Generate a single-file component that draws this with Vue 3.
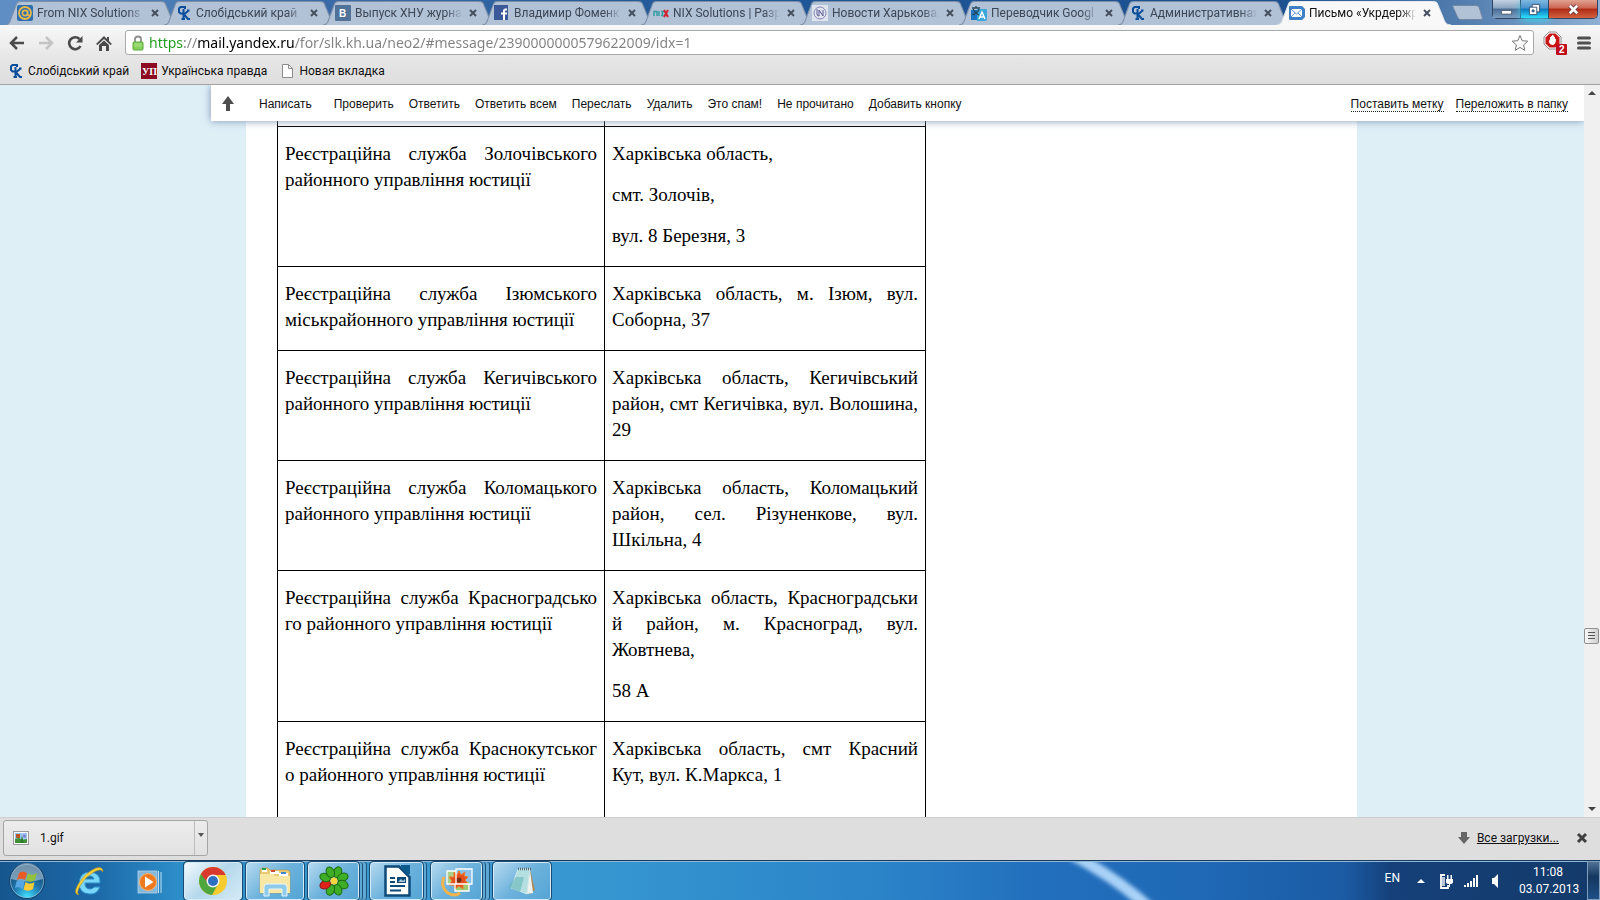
<template>
  <div class="desktop">
    <!-- вкладки браузера -->
    <header class="tab_strip">
      <nav class="tabs">
        <div
          v-for="(tab, index) in tabs"
          :key="tab.title"
          :class="['tab', { active: index === activeTab }]"
          @click="activeTab = index"
        >
          <svg class="tab_shape" viewBox="0 0 174 24" preserveAspectRatio="none">
            <path
              d="M0 24C4 24 5 21 6 18L11 5C12 2 13 1.5 16 1.5H155C159 1.5 160 2 161 5L167 19C168 22 170 24 174 24"
            />
          </svg>
          <svg class="favicon" viewBox="0 0 16 16">
            <template v-if="tab.icon === 'mailru'">
              <rect width="16" height="16" rx="2" fill="#2d6fae" />
              <circle cx="8" cy="8" r="6" fill="none" stroke="#e9b84c" stroke-width="1.8" />
              <circle cx="8" cy="8" r="2.6" fill="none" stroke="#e9b84c" stroke-width="1.6" />
              <path d="M10.6 5.5V9C10.6 11 13 11 13.5 9" fill="none" stroke="#e9b84c" stroke-width="1.4" />
            </template>
            <template v-else-if="tab.icon === 'sk'">
              <path d="M9 4V2H4.500L3 3.500V7L4.500 8.500H7" fill="none" stroke="#0b4f9c" stroke-width="2" />
              <path d="M7.500 4V14M5.500 14H9M12.500 5.500L8 9.500L12 14H14M11 5.500H13.500" fill="none" stroke="#0b4f9c" stroke-width="2" />
            </template>
            <template v-else-if="tab.icon === 'vk'">
              <rect width="16" height="16" rx="1" fill="#507299" />
              <text x="4" y="12" class="glyph" fill="#fff">B</text>
            </template>
            <template v-else-if="tab.icon === 'fb'">
              <rect y="0" width="14" height="15" fill="#3b5998" />
              <path d="M13 4.500H11.500Q10 4.500 10 6V15M7 8.500H13" fill="none" stroke="#fff" stroke-width="2" />
            </template>
            <template v-else-if="tab.icon === 'nix'">
              <path d="M1 11V6.500H4V11M6 6V11M8 6.500H11M8 10.500H10.500M9.500 6.500V10.500" fill="none" stroke="#2f9aa0" stroke-width="1.4" />
              <path d="M11 5L15 12M15 5L11 12" stroke="#cf2430" stroke-width="2" />
            </template>
            <template v-else-if="tab.icon === 'news'">
              <rect width="16" height="16" fill="#dfe5ef" />
              <circle cx="8" cy="8" r="6" fill="none" stroke="#8a86b4" />
              <path d="M5 4V9Q5 11 7 11V5L11 11V5" fill="none" stroke="#5e5a95" />
            </template>
            <template v-else-if="tab.icon === 'translate'">
              <rect x="0" y="5" width="8" height="10" fill="#1873c0" />
              <path d="M6 4H15L16 5V15L14 16H6Z" fill="#3ba6dc" />
              <path d="M1 3H9M5 1V3M2 4C4 8 6 9 8 10M8 4C7 8 4 9 1 10" fill="none" stroke="#27485f" stroke-width="1.3" />
              <path d="M8 14L11 7L14 14M9 12H13" fill="none" stroke="#fff" stroke-width="1.4" />
            </template>
            <template v-else>
              <path d="M1 1H13L16 4V12L13 15H1Q0 15 0 14V2Q0 1 1 1Z" fill="#3f7fc6" />
              <rect x="2" y="4" width="11" height="8" fill="#fff" />
              <path d="M2 4L7.500 9L13 4M2 12L6 8M13 12L9 8" fill="none" stroke="#5b93d0" />
            </template>
          </svg>
          <span class="tab_title">{{ tab.title }}</span>
          <button class="tab_close" aria-label="Закрыть вкладку">
            <svg viewBox="0 0 8 8"><path d="M1 1L7 7M7 1L1 7" /></svg>
          </button>
        </div>
        <button class="new_tab" aria-label="Новая вкладка">
          <svg viewBox="0 0 31 15">
            <path d="M1 2Q0 .5 2 .5H24Q26 .5 27 2L30.500 13Q31 14.500 29 14.500H9Q7 14.500 6 13Z" />
          </svg>
        </button>
      </nav>
      <div class="window_buttons">
        <button class="win_min" aria-label="Свернуть">
          <svg viewBox="0 0 14 14"><path d="M1.500 8H12.500V12H1.500Z" fill="#fff" stroke="#4a5a70" /></svg>
        </button>
        <button class="win_restore" aria-label="Восстановить">
          <svg viewBox="0 0 14 14">
            <path d="M4.500 1.500H12.500V9.500H4.500Z" fill="#fff" stroke="#34506e" />
            <path d="M1.500 4.500H9.500V12.500H1.500Z" fill="#fff" stroke="#34506e" />
            <path d="M4.500 7.500H6.500V9.500H4.500Z" fill="#1a8fd0" stroke="#34506e" />
          </svg>
        </button>
        <button class="win_close" aria-label="Закрыть">
          <svg viewBox="0 0 14 14">
            <path d="M3 3L11 11M11 3L3 11" stroke="#5b3440" stroke-width="4.5" />
            <path d="M3 3L11 11M11 3L3 11" stroke="#fff" stroke-width="2.8" />
          </svg>
        </button>
      </div>
    </header>

    <!-- адресная строка -->
    <div class="toolbar">
      <button class="nav_button" aria-label="Назад">
        <svg viewBox="0 0 16 16"><path d="M15 8H2M8 2L2 8L8 14" fill="none" stroke="#4a4a4a" stroke-width="2.5" /></svg>
      </button>
      <button class="nav_button" aria-label="Вперёд">
        <svg viewBox="0 0 16 16"><path d="M1 8H14M8 2L14 8L8 14" fill="none" stroke="#c4c4c4" stroke-width="2.5" /></svg>
      </button>
      <button class="nav_button" aria-label="Обновить">
        <svg viewBox="0 0 16 16">
          <path d="M12.500 4A6 6 0 1 0 13.500 11" fill="none" stroke="#4a4a4a" stroke-width="2.6" />
          <path d="M15.500 1V7.500H9Z" fill="#4a4a4a" />
        </svg>
      </button>
      <button class="nav_button" aria-label="Домой">
        <svg viewBox="0 0 16 16">
          <path d="M8 1L11 4V2H13V6L16 9L14.500 10L8 4L1.500 10L0 9Z" fill="#4a4a4a" />
          <path d="M3 10L8 5.500L13 10V16H10V11H6V16H3Z" fill="#4a4a4a" />
        </svg>
      </button>
      <div class="address">
        <svg class="lock" viewBox="0 0 12 16">
          <path d="M3 8V4Q3 1.500 6 1.500T9 4V8" fill="none" stroke="#8d8d8d" stroke-width="1.8" />
          <rect x="1" y="7" width="10" height="8" rx="1" fill="#86cf5c" stroke="#57a93a" />
          <path d="M2 9H10M2 11H10" stroke="#a9e384" />
        </svg>
        <input v-model="url" class="url" type="text" aria-label="Адрес" spellcheck="false" />
        <button class="star" aria-label="Добавить в закладки">
          <svg viewBox="0 0 18 18">
            <path d="M9 1.500L11.200 6.700L16.800 7.200L12.600 10.900L13.800 16.300L9 13.400L4.200 16.300L5.400 10.900L1.200 7.200L6.800 6.700Z" />
          </svg>
        </button>
      </div>
      <button class="adblock" aria-label="AdBlock">
        <svg viewBox="0 0 24 24">
          <path d="M6 1H13L18 6V13L13 18H6L1 13V6Z" fill="#fff" stroke="#8c8c8c" />
          <path d="M6.500 2.500H12.500L16.500 6.500V12.500L12.500 16.500H6.500L2.500 12.500V6.500Z" fill="#c81818" />
          <path d="M6 8V11Q7 14 10 14Q13 13 13 8H12V6H11V4.500H10V4H9V5H8V6H7V10L6 8Z" fill="#fff" />
          <rect x="13" y="13" width="11" height="11" rx="1" fill="#c00d1c" />
          <text x="16" y="22" class="glyph" fill="#fff">2</text>
        </svg>
      </button>
      <button class="menu" aria-label="Меню">
        <svg viewBox="0 0 14 14"><path d="M1.500 2H12.500M1.500 7H12.500M1.500 12H12.500" stroke="#4f4f4f" stroke-width="3" stroke-linecap="round" /></svg>
      </button>
    </div>

    <!-- панель закладок -->
    <nav class="bookmarks">
      <a href="#">
        <svg class="bookmark_icon" viewBox="0 0 16 16">
          <path d="M9 4V2H4.500L3 3.500V7L4.500 8.500H7" fill="none" stroke="#0b4f9c" stroke-width="2" />
          <path d="M7.500 4V14M5.500 14H9M12.500 5.500L8 9.500L12 14H14M11 5.500H13.500" fill="none" stroke="#0b4f9c" stroke-width="2" />
        </svg>
        Слобідський край
      </a>
      <a href="#">
        <svg class="bookmark_icon" viewBox="0 0 16 16">
          <rect width="16" height="16" fill="#8c0b22" />
          <text x="1" y="12" class="glyph serif" fill="#fff">УП</text>
        </svg>
        Українська правда
      </a>
      <a href="#">
        <svg class="bookmark_icon" viewBox="0 0 16 16">
          <path d="M3.500 1.500H9.500L13.500 5.500V14.500H3.500Z" fill="#fff" stroke="#8b8b8b" />
          <path d="M9.500 1.500V5.500H13.500" fill="none" stroke="#8b8b8b" />
        </svg>
        Новая вкладка
      </a>
    </nav>

    <!-- страница почты -->
    <main class="viewport">
      <div class="mail">
        <div class="mail_toolbar">
          <button class="to_top" aria-label="Наверх">
            <svg viewBox="0 0 12 16"><path d="M6 0L12 8H8V15H4V8H0Z" fill="#4d4d4d" /></svg>
          </button>
          <button v-for="action in actions" :key="action" class="mail_action">{{ action }}</button>
          <div class="mail_links">
            <a href="#">Поставить метку</a>
            <a href="#">Переложить в папку</a>
          </div>
        </div>
        <article class="letter">
          <table class="services">
            <tbody>
              <tr class="cut">
                <td></td>
                <td></td>
              </tr>
              <tr v-for="row in rows" :key="row.name[0]">
                <td>
                  <p><span v-for="line in row.name" :key="line">{{ line }}</span></p>
                </td>
                <td>
                  <p v-for="part in row.address" :key="part[0]">
                    <span v-for="line in part" :key="line">{{ line }}</span>
                  </p>
                </td>
              </tr>
            </tbody>
          </table>
        </article>
      </div>
      <div class="scrollbar">
        <svg class="scroll_arrow" viewBox="0 0 16 16"><path d="M4 10L8 6L12 10Z" /></svg>
        <div class="scroll_thumb"><i></i><i></i><i></i></div>
        <svg class="scroll_arrow" viewBox="0 0 16 16"><path d="M4 6L8 10L12 6Z" /></svg>
      </div>
    </main>

    <!-- загрузки -->
    <section class="downloads">
      <div class="download">
        <button class="download_file">
          <svg viewBox="0 0 16 16">
            <rect x=".5" y="1.5" width="15" height="13" fill="#fff" stroke="#9a9a9a" />
            <rect x="2" y="3" width="12" height="10" fill="#9cc2ee" />
            <path d="M2 9L6 8L9 10L14 9V13H2Z" fill="#3f8f34" />
            <path d="M3 4H7V8H3Z" fill="#b7582b" />
            <path d="M7 13L9 6L11 13Z" fill="#2b7d28" />
            <circle cx="11.5" cy="6" r="1.5" fill="#7f7fd0" />
          </svg>
          1.gif
        </button>
        <button class="download_more" aria-label="Ещё">
          <svg viewBox="0 0 8 8"><path d="M1 2H7L4 6Z" fill="#555" /></svg>
        </button>
      </div>
      <svg class="down_arrow" viewBox="0 0 12 12"><path d="M3 0H9V5H12L6 12L0 5H3Z" fill="#666" /></svg>
      <a class="all_downloads" href="#">Все загрузки...</a>
      <button class="downloads_close" aria-label="Закрыть">
        <svg viewBox="0 0 12 12"><path d="M2 2L10 10M10 2L2 10" stroke="#3f3f3f" stroke-width="3" /></svg>
      </button>
    </section>

    <!-- панель задач -->
    <footer class="taskbar">
      <svg class="light" viewBox="0 0 200 40" preserveAspectRatio="none">
        <defs><filter id="soft"><feGaussianBlur stdDeviation="2" /></filter></defs>
        <path d="M32 -8Q82 20 116 55" fill="none" stroke="#a9d2f8" stroke-width="12" filter="url(#soft)" />
      </svg>
      <button class="start" aria-label="Пуск">
        <svg viewBox="0 0 38 38">
          <defs>
            <radialGradient id="orb" cx=".5" cy=".95" r=".9">
              <stop offset="0" stop-color="#3fe0ff" />
              <stop offset=".45" stop-color="#1f78ae" />
              <stop offset="1" stop-color="#153f66" />
            </radialGradient>
          </defs>
          <circle cx="19" cy="19" r="17.5" fill="url(#orb)" stroke="#1b3d5e" />
          <path d="M3 17A16 16 0 0 1 35 17Q19 22 3 17Z" fill="#cfdfea" opacity=".5" />
          <circle cx="19" cy="19" r="16.5" fill="none" stroke="#8fc0df" opacity=".7" />
          <path d="M11 11Q15 8 19 11L17 18Q13 15 9 18Z" fill="#ea5a26" />
          <path d="M20 11.500Q24 14 29 11L27 18Q23 21 18 18.500Z" fill="#93c13d" />
          <path d="M8.500 19.500Q13 17 16.500 19.500L15 27Q11 24 7 26Z" fill="#56a6e4" />
          <path d="M17.500 20Q22 23 26.500 20L25 27Q20 30 15.500 27.500Z" fill="#fccb36" />
        </svg>
      </button>
      <button class="pinned" aria-label="Internet Explorer">
        <svg viewBox="0 0 34 34">
          <path d="M28 19H13Q13 25 18 25Q21 25 22 23H28Q25 31 17 30Q7 29 7 19Q8 8 18 8Q29 9 28 19ZM13 15H22Q21 12 18 12Q14 12 13 15Z" fill="#79d7fa" stroke="#2b8ec8" />
          <path d="M7 31Q0 30 7 19Q14 8 24 4Q31 2 31 8Q29 4 22 8Q13 13 8 22Q4 29 7 31Z" fill="#f6cf3c" stroke="#b78a16" stroke-width=".5" />
        </svg>
      </button>
      <button class="pinned" aria-label="Windows Media Player">
        <svg viewBox="0 0 34 34">
          <rect x="6" y="7" width="19" height="22" fill="#9cc7e4" stroke="#d4e9f5" stroke-width=".8" opacity=".8" />
          <path d="M26.500 7V29M29 8V29" stroke="#c5dff0" />
          <circle cx="16" cy="18" r="8.5" fill="#ee7a1f" stroke="#f7b477" />
          <path d="M13 12.500V23.500L21.500 18Z" fill="#fff" />
        </svg>
      </button>
      <div class="tasks">
        <button class="task current" aria-label="Google Chrome">
          <svg viewBox="0 0 32 32">
            <circle cx="16" cy="16" r="14" fill="#f6cb2d" />
            <path d="M16 16L3.900 9A14 14 0 0 0 15 30L21 19Z" fill="#4ea63e" />
            <path d="M3.900 9A14 14 0 0 1 28.600 10H16L10 17Z" fill="#d93a2d" />
            <circle cx="16" cy="16" r="6.5" fill="#eef3f7" />
            <circle cx="16" cy="16" r="5" fill="#2f6fc0" />
          </svg>
        </button>
        <button class="task" aria-label="Проводник">
          <svg viewBox="0 0 32 32">
            <path d="M1 5L3 3H9L11 5H29L31 7V28H1Z" fill="#e8cb74" stroke="#b5944a" stroke-width=".6" />
            <path d="M3 4H8V7H3Z" fill="#fff" />
            <path d="M3 3H7V5H3Z" fill="#2aa046" />
            <path d="M11 6H20V9H11Z" fill="#fff" />
            <path d="M12 5H16V7H12Z" fill="#d34a32" />
            <path d="M20 8H29V11H20Z" fill="#fff" />
            <path d="M22 7H27V9H22Z" fill="#3a86d0" />
            <path d="M1 9H14L16 11H31V28H1Z" fill="#f9e7a5" />
            <path d="M5 31V22Q5 19 8 19H25Q28 19 28 22V31H23V24H10V31Z" fill="#8ecbea" stroke="#e6f6fd" />
          </svg>
        </button>
        <button class="task stacked two" aria-label="ICQ">
          <svg viewBox="0 0 32 32">
            <g fill="#3fae26" stroke="#1d6e12">
              <ellipse
                v-for="angle in petals"
                :key="angle"
                :class="{ red_petal: angle === 247 }"
                cx="16"
                cy="6.5"
                rx="4"
                ry="5.5"
                :transform="`rotate(${angle} 16 16)`"
              />
            </g>
            <circle cx="16" cy="16" r="3.5" fill="#f7d43d" />
          </svg>
        </button>
        <button class="task stacked" aria-label="LibreOffice Writer">
          <svg viewBox="0 0 32 32">
            <path d="M4.500 1.500H18L28.500 12V30.500H4.500Z" fill="#fdfdfd" stroke="#0d4a78" stroke-width="2.5" />
            <path d="M20 0H29V9L26 9L20 3Z" fill="#0d5a8c" />
            <path d="M9 13H14M9 17H14M9 21H24M9 25.500H20" stroke="#0d4a78" stroke-width="2" />
            <rect x="16" y="12" width="9" height="6" fill="#0d4a78" />
            <path d="M17.500 16.500L20 14L22 16L24 14V17H17.500Z" fill="#a9c9de" />
          </svg>
        </button>
        <button class="task stacked two" aria-label="Просмотр изображений">
          <svg viewBox="0 0 32 32">
            <path d="M3 12Q-1 22 7 28Q14 32 19 28" fill="none" stroke="#f0b44c" stroke-width="3" />
            <rect x="6" y="6" width="15" height="13" fill="#a8cf8b" />
            <rect x="15" y="4" width="16" height="15" fill="#8fc0ea" />
            <rect x="14" y="17" width="14" height="9" fill="#9ccb73" />
            <path d="M18 6L20 10L24 7L23 11L27 12L24 15L27 19L22 19L22 24L18 21L14 24L13 20L8 20L11 16L8 12L13 12L13 7L16 10Z" fill="#e4501c" stroke="#f07c2a" />
            <circle cx="18" cy="15" r="2.5" fill="#7a2d10" />
            <path d="M6 6H15V19H6ZM15 4H31V19H15ZM14 19H28V26H14Z" fill="none" stroke="#fff" stroke-width="1.3" />
          </svg>
        </button>
        <button class="task" aria-label="Блокнот">
          <svg viewBox="0 0 32 32">
            <path d="M24 4L29 25L24 29L20 28Z" fill="#a98b5f" />
            <path d="M24 5L27 28L21 29Z" fill="#eef2ef" />
            <path d="M12 4H24L21 29L5 23Z" fill="#b4dfe1" stroke="#e3f4f4" stroke-width=".7" />
            <path d="M10 12L2 22L14 27L18 12Z" fill="#5fb0b2" opacity=".55" />
            <path d="M12 4H25" stroke="#596a70" stroke-width="2.5" stroke-dasharray="1 1" />
          </svg>
        </button>
      </div>
      <div class="tray">
        <button class="language">EN</button>
        <svg viewBox="0 0 16 16"><path d="M4 10L8 6L12 10Z" fill="#fff" /></svg>
        <svg viewBox="0 0 16 16">
          <path d="M7 2H3V15H10V12" fill="none" stroke="#fff" stroke-width="1.8" />
          <path d="M4 4H7V13H4Z" fill="#fff" opacity=".7" />
          <path d="M8 6H15V9Q15 11 11.500 11Q8 11 8 9ZM9 2H10.500V6H9ZM12.500 2H14V6H12.500ZM11 11H12V14H11Z" fill="#fff" />
        </svg>
        <svg viewBox="0 0 16 16">
          <path d="M1 12H3V14H1ZM4 10H6V14H4ZM7 8H9V14H7ZM10 5H12V14H10ZM13 2H15V14H13Z" fill="#fff" />
        </svg>
        <svg viewBox="0 0 16 16"><path d="M4 5H6L10 1V15L6 11H4Z" fill="#fff" /></svg>
        <time class="clock"><span>11:08</span><span>03.07.2013</span></time>
        <button class="show_desktop" aria-label="Свернуть все окна"></button>
      </div>
    </footer>
  </div>
</template>

<script setup>
import { ref } from 'vue'

const activeTab = ref(8)
const url = ref('https://mail.yandex.ru/for/slk.kh.ua/neo2/#message/2390000000579622009/idx=1')

const tabs = [
  { icon: 'mailru', title: 'From NIX Solutions' },
  { icon: 'sk', title: 'Слобідський край' },
  { icon: 'vk', title: 'Выпуск ХНУ журна' },
  { icon: 'fb', title: 'Владимир Фоменк' },
  { icon: 'nix', title: 'NIX Solutions | Разр' },
  { icon: 'news', title: 'Новости Харькова.' },
  { icon: 'translate', title: 'Переводчик Googl' },
  { icon: 'sk', title: 'Административная' },
  { icon: 'mail', title: 'Письмо «Укрдержр' }
]

const actions = [
  'Написать',
  'Проверить',
  'Ответить',
  'Ответить всем',
  'Переслать',
  'Удалить',
  'Это спам!',
  'Не прочитано',
  'Добавить кнопку'
]

// строки письма разбиты так же, как в исходном документе
const rows = [
  {
    name: ['Реєстраційна служба Золочівського', 'районного управління юстиції'],
    address: [['Харківська область,'], ['смт. Золочів,'], ['вул. 8 Березня, 3']]
  },
  {
    name: ['Реєстраційна служба Ізюмського', 'міськрайонного управління юстиції'],
    address: [['Харківська область, м. Ізюм, вул.', 'Соборна, 37']]
  },
  {
    name: ['Реєстраційна служба Кегичівського', 'районного управління юстиції'],
    address: [['Харківська область, Кегичівський', 'район, смт Кегичівка, вул. Волошина,', '29']]
  },
  {
    name: ['Реєстраційна служба Коломацького', 'районного управління юстиції'],
    address: [['Харківська область, Коломацький', 'район, сел. Різуненкове, вул.', 'Шкільна, 4']]
  },
  {
    name: ['Реєстраційна служба Красноградсько', 'го районного управління юстиції'],
    address: [['Харківська область, Красноградськи', 'й район, м. Красноград, вул.', 'Жовтнева,'], ['58 А']]
  },
  {
    name: ['Реєстраційна служба Краснокутськог', 'о районного управління юстиції'],
    address: [['Харківська область, смт Красний', 'Кут, вул. К.Маркса, 1'], ['\u00a0']]
  }
]

const petals = [22, 67, 112, 157, 202, 247, 292, 337]
</script>

<style>
body {
  overflow: hidden;
}
</style>

<style scoped>
.desktop {
  display: flex;
  flex-direction: column;
  height: 100vh;
  overflow: hidden;
  font-family: Roboto, 'Noto Sans', sans-serif;
  font-size: 12px;
  color: #111;
}

button {
  padding: 0;
  border: none;
  background: none;
  font: inherit;
  color: inherit;
  cursor: pointer;
}

a {
  color: inherit;
  text-decoration: none;
}

svg {
  display: block;
}

.glyph {
  font-size: 10px;
  font-weight: bold;
  font-family: 'Liberation Sans', sans-serif;
}

.glyph.serif {
  font-family: 'Liberation Serif', serif;
}

/* вкладки */
.tab_strip {
  display: flex;
  flex-shrink: 0;
  height: 25px;
  background: linear-gradient(90deg, #5f8fc4 0, #3a6ba8 20%, #1f5798 45%, #1c5090 80%, #5580b0 92%, #8fb0d4 100%);
}

.tabs {
  display: flex;
  flex: 1;
  min-width: 0;
  padding-left: 5px;
}

.tab {
  position: relative;
  display: flex;
  flex: 0 1 174px;
  align-items: center;
  gap: 4px;
  min-width: 0;
  margin-right: -15px;
  padding: 1px 17px 0 12px;
  box-sizing: border-box;
  color: #3c4654;
  isolation: isolate;
}

.tab.active {
  z-index: 1;
  color: #111;
}

.tab_shape {
  position: absolute;
  left: 0;
  top: 0;
  z-index: -1;
  width: 100%;
  height: 25px;
}

.tab_shape path {
  fill: #b1c1d6;
  stroke: #7d8fa8;
}

.tab.active .tab_shape path {
  fill: #f8f8f8;
  stroke: #e4e9f0;
}

.favicon {
  flex-shrink: 0;
  width: 16px;
  height: 16px;
}

.tab_title {
  flex: 1;
  overflow: hidden;
  white-space: nowrap;
  mask-image: linear-gradient(90deg, #000 85%, transparent);
}

.tab_close svg {
  width: 8px;
  height: 8px;
  margin: 3px;
}

.tab_close path {
  stroke: #46505e;
  stroke-width: 2;
}

.new_tab {
  align-self: flex-start;
  margin: 5px 0 0 16px;
}

.new_tab svg {
  width: 31px;
  height: 15px;
}

.new_tab path {
  fill: #b1c1d6;
  stroke: #7488a3;
}

.window_buttons {
  display: flex;
  height: 18px;
  margin-right: 2px;
  border: 1px solid #2e4460;
  border-top: none;
  border-radius: 0 0 5px 5px;
}

.window_buttons button {
  display: flex;
  align-items: center;
  justify-content: center;
  width: 28px;
  background: linear-gradient(#c4d2e2, #8ba3bf 45%, #4a6c94 50%, #7d9cc0);
  border-right: 1px solid #2e4460;
}

.window_buttons svg {
  width: 13px;
  height: 13px;
}

.window_buttons .win_restore {
  background: linear-gradient(#7fb8e0, #4a93cc 45%, #0b76bd 50%, #2fe0fb);
  box-shadow: 0 2px 8px #37d5f5;
}

.window_buttons .win_close {
  width: 48px;
  border-right: none;
  border-radius: 0 0 4px 0;
  background: linear-gradient(#e0a392, #cc6450 45%, #b02a15 50%, #d3613f);
}

/* адресная строка */
.toolbar {
  display: flex;
  flex-shrink: 0;
  align-items: center;
  gap: 13px;
  height: 33px;
  padding: 2px 9px 0;
  box-sizing: border-box;
  background: linear-gradient(#f8f8f8, #e6e6e6);
}

.nav_button svg {
  width: 16px;
  height: 16px;
}

.address {
  display: flex;
  flex: 1;
  align-items: center;
  height: 25px;
  padding: 0 4px 0 6px;
  box-sizing: border-box;
  border: 1px solid #a9a9a9;
  border-radius: 3px;
  background: #fff;
}

.lock {
  width: 12px;
  height: 16px;
}

.url {
  flex: 1;
  min-width: 0;
  padding: 0;
  margin-left: 5px;
  border: none;
  outline: none;
  font: 14px 'Noto Sans', 'Open Sans', sans-serif;
  color: transparent;
  caret-color: #111;
  background: linear-gradient(90deg, #1c9a1c 35px, #808080 35px 48px, #000 48px 145px, #808080 145px);
  background-clip: text;
}

.star svg {
  width: 18px;
  height: 18px;
}

.star path {
  fill: #fff;
  stroke: #777;
}

.adblock {
  margin-left: -4px;
}

.adblock svg {
  width: 24px;
  height: 24px;
}

.menu {
  margin-left: -3px;
}

.menu svg {
  width: 14px;
  height: 14px;
}

/* закладки */
.bookmarks {
  display: flex;
  flex-shrink: 0;
  align-items: center;
  gap: 12px;
  height: 27px;
  padding: 0 8px 1px;
  box-sizing: border-box;
  border-bottom: 1px solid #a3a3a3;
  background: linear-gradient(#e6e6e6, #dedede);
}

.bookmarks a {
  display: flex;
  align-items: center;
  gap: 4px;
}

.bookmark_icon {
  width: 16px;
  height: 16px;
}

/* почта */
.viewport {
  display: flex;
  flex: 1;
  min-height: 0;
}

.mail {
  display: flex;
  flex: 1;
  flex-direction: column;
  min-width: 0;
  overflow: hidden;
  background: #deeff6;
}

.mail_toolbar {
  z-index: 1;
  display: flex;
  flex-shrink: 0;
  align-items: center;
  gap: 15px;
  height: 36px;
  margin-left: 211px;
  padding: 2px 16px 0 11px;
  box-sizing: border-box;
  background: #fff;
  box-shadow: 0 0 8px #7f94b4;
  font-family: 'Liberation Sans', Arial, sans-serif;
  font-size: 12px;
}

.to_top {
  margin-right: 10px;
}

.to_top svg {
  width: 12px;
  height: 16px;
}

.mail_action {
  white-space: nowrap;
}

.to_top + .mail_action {
  margin-right: 7px;
}

.mail_links {
  display: flex;
  gap: 12px;
  margin-left: auto;
}

.mail_links a {
  border-bottom: 1px dotted #222;
}

.letter {
  flex: 1;
  min-height: 0;
  margin: 0 227px 0 246px;
  padding-left: 31px;
  background: #fff;
}

.services {
  width: 649px;
  border-collapse: collapse;
  table-layout: fixed;
  font-family: 'Liberation Serif', 'Times New Roman', serif;
  font-size: 19px;
  line-height: 26px;
  color: #000;
}

.services td {
  padding: 14px 7px 17px;
  border: 1px solid #000;
  vertical-align: top;
}

.services td:first-child {
  width: 327px;
  box-sizing: border-box;
}

.services .cut td {
  height: 5px;
  padding: 0;
  border-top: none;
}

.services p {
  margin: 0;
}

.services p + p {
  margin-top: 15px;
}

.services span {
  display: block;
  white-space: nowrap;
  text-align-last: justify;
}

.services span:last-child {
  text-align-last: left;
}

.scrollbar {
  display: flex;
  flex-direction: column;
  width: 16px;
  background: #f0f0f0;
}

.scroll_arrow {
  width: 16px;
  height: 16px;
  fill: #444;
}

.scroll_thumb {
  display: flex;
  flex-direction: column;
  gap: 2px;
  margin: 527px 1px auto 0;
  padding: 3px 3px 4px;
  border: 1px solid #8f8f8f;
  border-radius: 2px;
  background: linear-gradient(90deg, #f8f8f8, #cfcfcf);
}

.scroll_thumb i {
  height: 1px;
  background: #555;
}

/* загрузки */
.downloads {
  display: flex;
  flex-shrink: 0;
  align-items: center;
  height: 43px;
  padding: 0 12px 2px 3px;
  box-sizing: border-box;
  border-top: 1px solid #cfcfcf;
  background: #dedede;
}

.download {
  display: flex;
  width: 205px;
  height: 36px;
  box-sizing: border-box;
  border: 1px solid #a5a5a5;
  border-radius: 3px;
  background: linear-gradient(#ececec, #e2e2e2);
}

.download_file {
  display: flex;
  flex: 1;
  align-items: center;
  gap: 11px;
  padding-left: 9px;
}

.download_file svg {
  width: 16px;
  height: 16px;
}

.download_more {
  width: 13px;
  padding: 0 2px 7px;
  border-left: 1px solid #bcbcbc;
}

.down_arrow {
  width: 12px;
  height: 12px;
  margin-left: auto;
}

.all_downloads {
  margin: 0 17px 0 7px;
  text-decoration: underline;
}

.downloads_close svg {
  width: 12px;
  height: 12px;
}

/* панель задач */
.taskbar {
  position: relative;
  display: flex;
  flex-shrink: 0;
  align-items: center;
  height: 40px;
  box-sizing: border-box;
  border-top: 1px solid #183a5c;
  box-shadow: inset 0 1px #8fb8d8;
  background: linear-gradient(90deg, #16568f 0, #1c69a8 6%, #2c8dc8 11%, #3f9bd0 25%, #3596d0 38%, #2b83c8 55%, #226fbd 65%, #1f69b6 75%, #1b5ba4 84%, #154079 87%, #133a69 100%);
  color: #fff;
}

.light {
  position: absolute;
  left: 65%;
  top: 1px;
  width: 200px;
  height: 38px;
}

.start {
  margin-left: 8px;
}

.start svg {
  width: 38px;
  height: 38px;
}

.pinned {
  margin-left: 26px;
}

.pinned svg {
  width: 34px;
  height: 34px;
}

.tasks {
  display: flex;
  gap: 4px;
  margin-left: 18px;
}

.task {
  display: flex;
  align-items: center;
  justify-content: center;
  width: 58px;
  height: 38px;
  box-sizing: border-box;
  border: 1px solid #d4eaf7;
  border-radius: 3px;
  outline: 1px solid #184b73;
  background: linear-gradient(135deg, #b5d9ef, #6cb2dc 50%, #55a5d6);
}

.task.current {
  background: linear-gradient(135deg, #f2f9fd, #b4d8ec 50%, #d5ebf6);
}

.task.stacked {
  width: 53px;
  margin-right: 4px;
  box-shadow: 3px 0 #5fa8d4, 4px 0 #1d527c;
}

.task.stacked.two {
  width: 51px;
  margin-right: 7px;
  box-shadow: 3px 0 #5fa8d4, 4px 0 #1d527c, 7px 0 #5fa8d4, 8px 0 #1d527c;
}

.task svg {
  width: 32px;
  height: 32px;
}

.red_petal {
  fill: #e0231d;
  stroke: #8e1512;
}

.tray {
  display: flex;
  align-items: center;
  gap: 9px;
  height: 100%;
  margin-left: auto;
}

.tray svg {
  width: 16px;
  height: 16px;
}

.language {
  margin: 0 4px 6px 0;
}

.clock {
  display: flex;
  flex-direction: column;
  width: 58px;
  margin: 0 1px 0 6px;
  line-height: 17px;
  text-align: center;
}

.show_desktop {
  width: 13px;
  height: 100%;
  border: 1px solid #7f9dbd;
  background: linear-gradient(#4f7196, #14375f 40%, #1e4f86);
}
</style>
